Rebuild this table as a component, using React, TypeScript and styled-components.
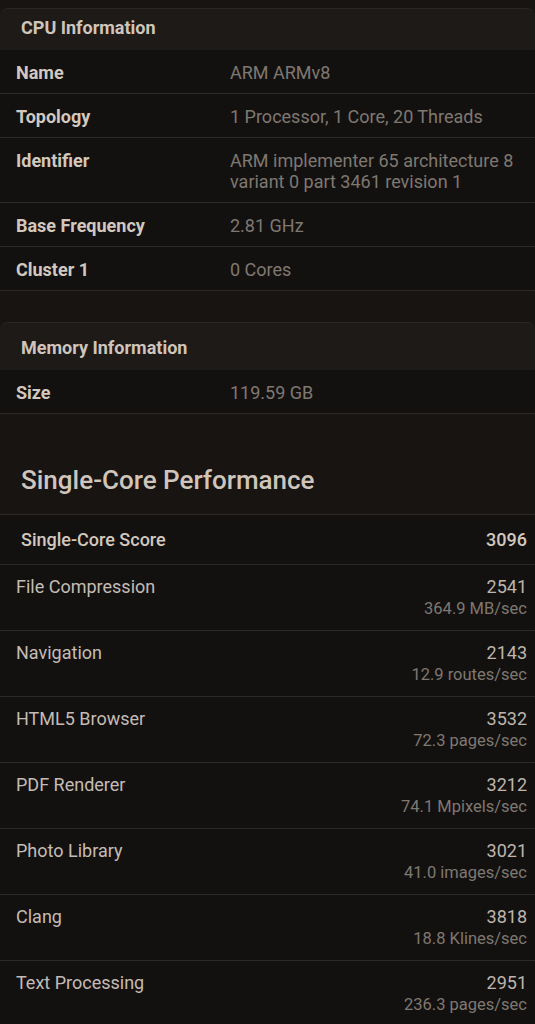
import React from "react";
import styled, { createGlobalStyle } from "styled-components";

const Global = createGlobalStyle`
  html, body { margin: 0; padding: 0; background: #171412; }
  body { font-family: Roboto, "Liberation Sans", sans-serif; -webkit-font-smoothing: antialiased; }
`;

const Page = styled.div`
  width: 535px;
  background: #171412;
  padding-top: 8px;
`;

const Card = styled.section<{ $gapTop?: number }>`
  margin-top: ${(p) => p.$gapTop ?? 0}px;
`;

const CardHeader = styled.div<{ $h: number; $pt: number }>`
  height: ${(p) => p.$h}px;
  box-sizing: border-box;
  padding: ${(p) => p.$pt}px 21px 0;
  background: #1d1a18;
  border-top: 1px solid #2a2624;
  border-radius: 8px 8px 0 0;
  color: #cfc5bb;
  font-size: 18px;
  font-weight: 700;
  line-height: 20px;
`;

const InfoRow = styled.div`
  display: grid;
  grid-template-columns: 214px 1fr;
  padding: 12px 8px 10px 16px;
  background: #131110;
  border-bottom: 1px solid #2d2926;
  font-size: 18px;
  line-height: 21px;
`;

const InfoLabel = styled.div`
  color: #d2c8be;
  font-weight: 700;
`;

const InfoValue = styled.div`
  color: #7f7871;
`;

const SectionTitle = styled.h2`
  margin: 0;
  height: 101px;
  box-sizing: border-box;
  padding: 51px 21px 0;
  color: #cfc5bb;
  font-size: 26px;
  font-weight: 500;
  line-height: 30px;
  border-bottom: 1px solid #2d2926;
`;

const ScoreRow = styled.div`
  display: flex;
  justify-content: space-between;
  align-items: center;
  height: 50px;
  box-sizing: border-box;
  padding: 0 8px 0 21px;
  background: #131110;
  border-bottom: 1px solid #2d2926;
  color: #d2c8be;
  font-size: 18px;
  font-weight: 500;
`;

const BenchRow = styled.div`
  display: flex;
  justify-content: space-between;
  height: 66px;
  box-sizing: border-box;
  padding: 12px 8px 0 16px;
  background: #131110;
  border-bottom: 1px solid #2d2926;
`;

const BenchName = styled.div`
  color: #c4bcb4;
  font-size: 18px;
  line-height: 20px;
`;

const BenchNums = styled.div`
  display: flex;
  flex-direction: column;
  align-items: flex-end;
`;

const BenchScore = styled.div`
  color: #bdb5ad;
  font-size: 18px;
  line-height: 20px;
`;

const BenchRate = styled.div`
  color: #7f7871;
  font-size: 16.5px;
  line-height: 24px;
`;

const cpu: [string, string][] = [
  ["Name", "ARM ARMv8"],
  ["Topology", "1 Processor, 1 Core, 20 Threads"],
  ["Identifier", "ARM implementer 65 architecture 8 variant 0 part 3461 revision 1"],
  ["Base Frequency", "2.81 GHz"],
  ["Cluster 1", "0 Cores"],
];

const benches = [
  ["File Compression", "2541", "364.9 MB/sec"],
  ["Navigation", "2143", "12.9 routes/sec"],
  ["HTML5 Browser", "3532", "72.3 pages/sec"],
  ["PDF Renderer", "3212", "74.1 Mpixels/sec"],
  ["Photo Library", "3021", "41.0 images/sec"],
  ["Clang", "3818", "18.8 Klines/sec"],
  ["Text Processing", "2951", "236.3 pages/sec"],
];

export default function App() {
  return (
    <Page>
      <Global />
      <Card>
        <CardHeader $h={42} $pt={9}>CPU Information</CardHeader>
        {cpu.map(([k, v]) => (
          <InfoRow key={k}>
            <InfoLabel>{k}</InfoLabel>
            <InfoValue>{v}</InfoValue>
          </InfoRow>
        ))}
      </Card>
      <Card $gapTop={31}>
        <CardHeader $h={48} $pt={15}>Memory Information</CardHeader>
        <InfoRow>
          <InfoLabel>Size</InfoLabel>
          <InfoValue>119.59 GB</InfoValue>
        </InfoRow>
      </Card>
      <SectionTitle>Single-Core Performance</SectionTitle>
      <ScoreRow>
        <span>Single-Core Score</span>
        <span>3096</span>
      </ScoreRow>
      {benches.map(([n, s, r]) => (
        <BenchRow key={n}>
          <BenchName>{n}</BenchName>
          <BenchNums>
            <BenchScore>{s}</BenchScore>
            <BenchRate>{r}</BenchRate>
          </BenchNums>
        </BenchRow>
      ))}
    </Page>
  );
}
